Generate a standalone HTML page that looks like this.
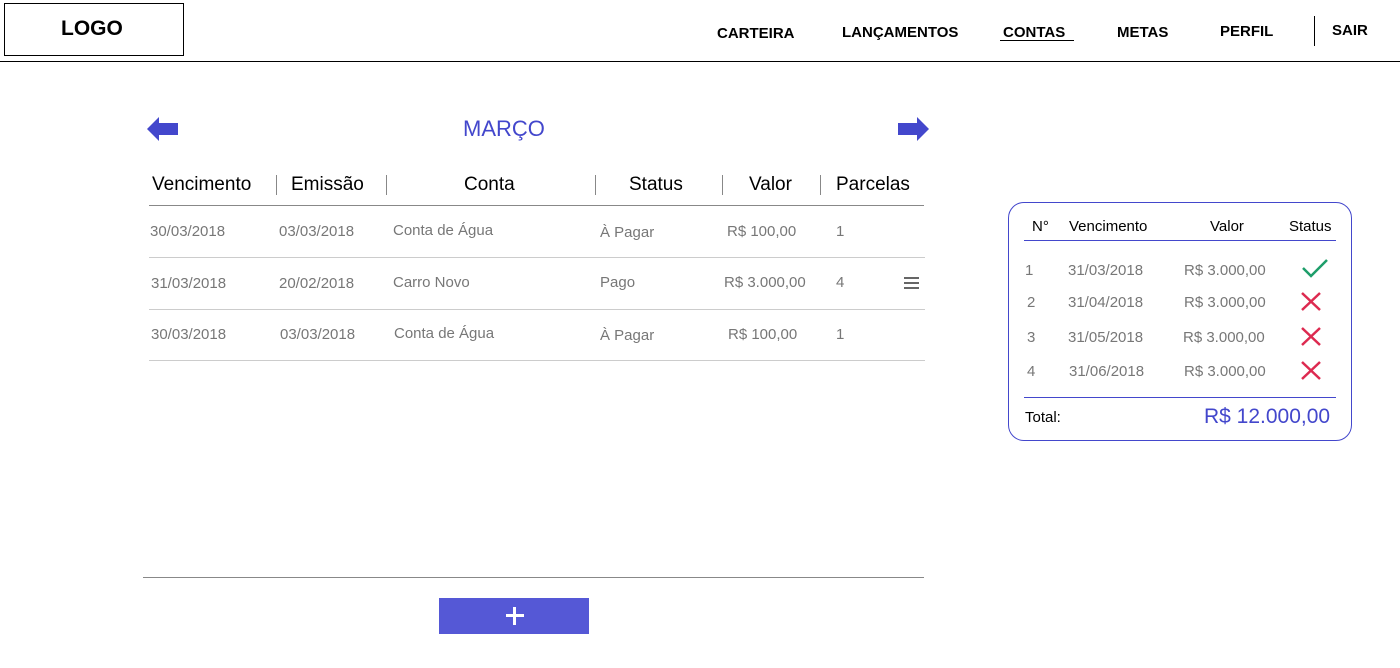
<!DOCTYPE html><html><head><meta charset="utf-8"><style>
body{margin:0;width:1400px;height:668px;position:relative;background:#fff;font-family:"Liberation Sans",Arial,sans-serif;overflow:hidden}
.a{position:absolute;white-space:nowrap}
.nav{font-weight:bold;font-size:15px;color:#000;top:24px}
.h{font-size:19px;color:#000;top:174px}
.g{font-size:15px;color:#777}
.vs{position:absolute;width:1px;background:#888;height:20px;top:175px}
.hl{position:absolute;height:1px;background:#ccc}
</style></head><body>
<div class="a" style="left:4px;top:3px;width:178px;height:51px;border:1px solid #000"></div>
<div class="a" style="left:61px;top:17px;font-size:21px;font-weight:bold">LOGO</div>
<div class="a" style="left:0;top:61px;width:1400px;height:1px;background:#000"></div>
<div class="a nav" style="left:717px;top:25px">CARTEIRA</div>
<div class="a nav" style="left:842px">LANÇAMENTOS</div>
<div class="a nav" style="left:1003px">CONTAS</div>
<div class="a" style="left:1000px;top:40px;width:74px;height:1px;background:#000"></div>
<div class="a nav" style="left:1117px">METAS</div>
<div class="a nav" style="left:1220px;top:23px">PERFIL</div>
<div class="a" style="left:1314px;top:16px;width:1px;height:30px;background:#000"></div>
<div class="a nav" style="left:1332px;top:22px">SAIR</div>

<svg class="a" style="left:147px;top:116px" width="32" height="26"><polygon points="0,13 12,1 12,7 31,7 31,19 12,19 12,25" fill="#4347cc"/></svg>
<svg class="a" style="left:898px;top:116px" width="32" height="26"><polygon points="31,13 19,1 19,7 0,7 0,19 19,19 19,25" fill="#4347cc"/></svg>
<div class="a" style="left:463px;top:116px;font-size:22px;color:#4347cc">MARÇO</div>

<div class="a h" style="left:152px">Vencimento</div>
<div class="vs" style="left:276px"></div>
<div class="a h" style="left:291px">Emissão</div>
<div class="vs" style="left:386px"></div>
<div class="a h" style="left:464px">Conta</div>
<div class="vs" style="left:595px"></div>
<div class="a h" style="left:629px">Status</div>
<div class="vs" style="left:722px"></div>
<div class="a h" style="left:749px">Valor</div>
<div class="vs" style="left:820px"></div>
<div class="a h" style="left:836px">Parcelas</div>
<div class="a" style="left:149px;top:205px;width:775px;height:1px;background:#888"></div>

<div class="a g" style="left:150px;top:223px">30/03/2018</div>
<div class="a g" style="left:279px;top:223px">03/03/2018</div>
<div class="a g" style="left:393px;top:222px">Conta de Água</div>
<div class="a g" style="left:600px;top:224px">À Pagar</div>
<div class="a g" style="left:727px;top:223px">R$ 100,00</div>
<div class="a g" style="left:836px;top:223px">1</div>
<div class="hl" style="left:149px;top:257px;width:776px"></div>

<div class="a g" style="left:151px;top:275px">31/03/2018</div>
<div class="a g" style="left:279px;top:275px">20/02/2018</div>
<div class="a g" style="left:393px;top:274px">Carro Novo</div>
<div class="a g" style="left:600px;top:274px">Pago</div>
<div class="a g" style="left:724px;top:274px">R$ 3.000,00</div>
<div class="a g" style="left:836px;top:274px">4</div>
<div class="a" style="left:904px;top:277px;width:15px;height:2px;background:#666;box-shadow:0 5px 0 #666,0 10px 0 #666"></div>
<div class="hl" style="left:149px;top:309px;width:776px"></div>

<div class="a g" style="left:151px;top:326px">30/03/2018</div>
<div class="a g" style="left:280px;top:326px">03/03/2018</div>
<div class="a g" style="left:394px;top:325px">Conta de Água</div>
<div class="a g" style="left:600px;top:327px">À Pagar</div>
<div class="a g" style="left:728px;top:326px">R$ 100,00</div>
<div class="a g" style="left:836px;top:326px">1</div>
<div class="hl" style="left:149px;top:360px;width:776px"></div>

<div class="a" style="left:143px;top:577px;width:781px;height:1px;background:#888"></div>
<div class="a" style="left:439px;top:598px;width:150px;height:36px;background:#5558d6"></div>
<div class="a" style="left:506px;top:614px;width:18px;height:3px;background:#fff"></div>
<div class="a" style="left:513px;top:607px;width:3px;height:18px;background:#fff"></div>

<div class="a" style="left:1008px;top:202px;width:342px;height:237px;border:1px solid #4347cc;border-radius:16px"></div>
<div class="a" style="left:1032px;top:218px;font-size:15px">N°</div>
<div class="a" style="left:1069px;top:218px;font-size:15px">Vencimento</div>
<div class="a" style="left:1210px;top:218px;font-size:15px">Valor</div>
<div class="a" style="left:1289px;top:218px;font-size:15px">Status</div>
<div class="a" style="left:1024px;top:240px;width:312px;height:1px;background:#4347cc"></div>
<div class="a g" style="left:1025px;top:262px">1</div><div class="a g" style="left:1068px;top:262px">31/03/2018</div><div class="a g" style="left:1184px;top:262px">R$ 3.000,00</div>
<div class="a g" style="left:1027px;top:294px">2</div><div class="a g" style="left:1068px;top:294px">31/04/2018</div><div class="a g" style="left:1184px;top:294px">R$ 3.000,00</div>
<div class="a g" style="left:1027px;top:329px">3</div><div class="a g" style="left:1068px;top:329px">31/05/2018</div><div class="a g" style="left:1183px;top:329px">R$ 3.000,00</div>
<div class="a g" style="left:1027px;top:363px">4</div><div class="a g" style="left:1069px;top:363px">31/06/2018</div><div class="a g" style="left:1184px;top:363px">R$ 3.000,00</div>
<svg class="a" style="left:1300px;top:256px" width="30" height="24"><polyline points="3,12 11,20 27,4" fill="none" stroke="#1e9e6a" stroke-width="2.5"/></svg>
<svg class="a" style="left:1300px;top:291px" width="24" height="22"><path d="M2,2L20,19M20,2L2,19" stroke="#dd2a50" stroke-width="2.5"/></svg>
<svg class="a" style="left:1300px;top:326px" width="24" height="22"><path d="M2,2L20,19M20,2L2,19" stroke="#dd2a50" stroke-width="2.5"/></svg>
<svg class="a" style="left:1300px;top:360px" width="24" height="22"><path d="M2,2L20,19M20,2L2,19" stroke="#dd2a50" stroke-width="2.5"/></svg>
<div class="a" style="left:1024px;top:397px;width:312px;height:1px;background:#4347cc"></div>
<div class="a" style="left:1025px;top:409px;font-size:15px">Total:</div>
<div class="a" style="left:1204px;top:405px;font-size:21px;color:#4347cc">R$ 12.000,00</div>
</body></html>
